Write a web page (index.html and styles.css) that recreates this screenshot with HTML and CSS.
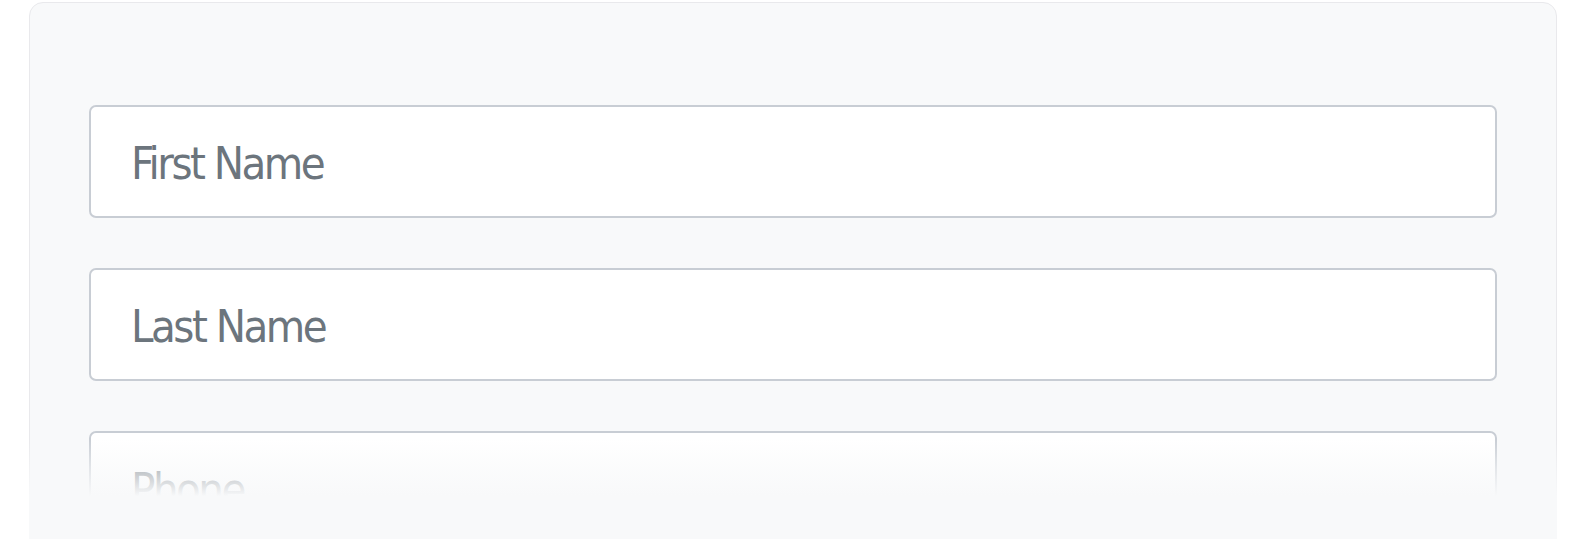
FILE: index.html
```html
<!DOCTYPE html>
<html lang="en">
<head>
<meta charset="utf-8">
<title>Form</title>
<link rel="stylesheet" href="styles.css">
</head>
<body>
  <div class="card">
    <form class="form">
      <input class="field" type="text" placeholder="First Name">
      <input class="field" type="text" placeholder="Last Name">
      <input class="field" type="text" placeholder="Phone">
    </form>
    <div class="fade"></div>
  </div>
</body>
</html>
```
FILE: styles.css
```css
html, body {
  margin: 0;
  padding: 0;
  background: #ffffff;
  overflow: hidden;
}

.card {
  position: relative;
  box-sizing: border-box;
  width: 1528px;
  margin: 2px auto 0;
  padding: 102px 59px 80px;
  background: #f8f9fa;
  border: 1px solid #e9e9ec;
  border-radius: 14px;
}

.form {
  display: flex;
  flex-direction: column;
  gap: 50px;
}

.field {
  box-sizing: border-box;
  display: block;
  width: 100%;
  height: 113px;
  padding: 4px 40px 0;
  border: 2.5px solid #c8cdd4;
  border-radius: 7px;
  background: #ffffff;
  font-family: "DejaVu Sans Condensed", "DejaVu Sans", sans-serif;
  font-stretch: condensed;
  font-size: 45px;
  letter-spacing: -2.5px;
  color: #6c757d;
  outline: none;
}

.field::placeholder {
  color: #6c757d;
  opacity: 1;
}

.fade {
  position: absolute;
  left: -1px;
  right: -1px;
  top: 436px;
  height: 130px;
  background: linear-gradient(to bottom, rgba(248, 249, 250, 0) 0%, rgba(248, 249, 250, 0.55) 22%, #f8f9fa 44%, #f8f9fa 100%);
}
```
